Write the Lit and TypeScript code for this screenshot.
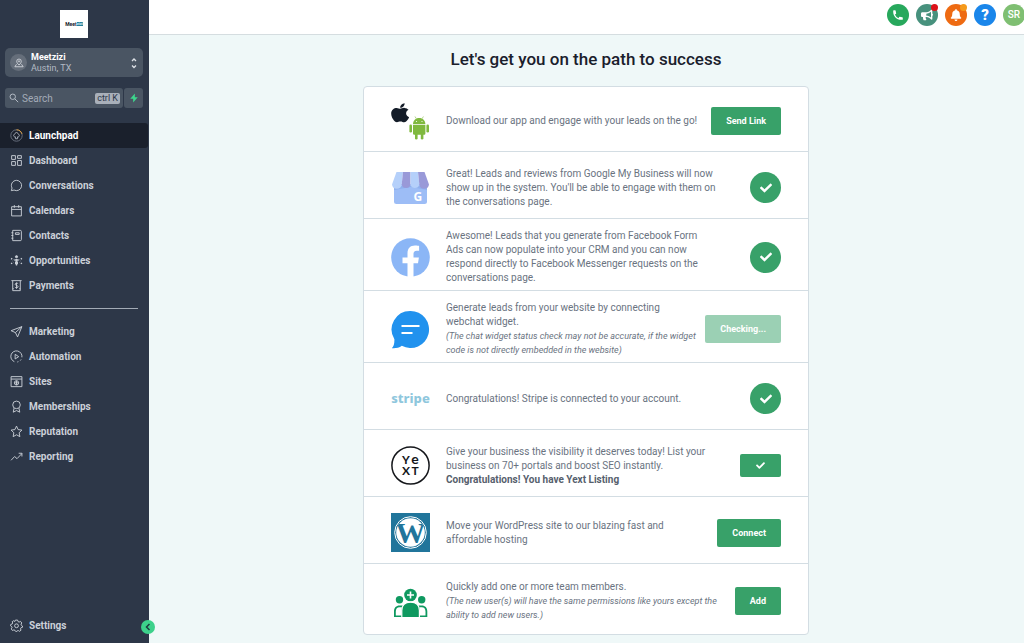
import { LitElement, html, css, svg, nothing, TemplateResult } from "lit";
import { customElement } from "lit/decorators.js";
import { classMap } from "lit/directives/class-map.js";

const checkPath = svg`<path fill="currentColor" d="M173.898 439.404l-166.4-166.4c-9.997-9.997-9.997-26.206 0-36.204l36.203-36.204c9.997-9.998 26.207-9.998 36.204 0L192 312.69 432.095 72.596c9.997-9.997 26.207-9.997 36.204 0l36.203 36.204c9.997 9.997 9.997 26.206 0 36.204l-294.4 294.401c-9.998 9.997-26.207 9.997-36.204-.001z"/>`;

const check = html`<svg class="check" viewBox="0 0 512 512" aria-hidden="true">${checkPath}</svg>`;

/* Line icons on a 24 unit grid. */
const navIcons: Record<string, unknown> = {
  launchpad: svg`<circle cx="12" cy="12" r="10.5" stroke="#6b7482"/><path d="M12 1.5A10.5 10.5 0 0 1 22 9" stroke="#e8a33d"/><path stroke="#aab1bb" d="M12 5.5l5 5.5a2.5 2.5 0 0 1-3 3.500V18h-4v-3.5A2.5 2.5 0 0 1 7 11z"/>`,
  dashboard: svg`<path d="M3 3h7v7H3zM14 3h7v5h-7zM3 14h7v7H3zM14 12h7v9h-7z"/>`,
  conversations: svg`<path d="M12 2.5a9.5 9.5 0 1 1-4.5 17.9L2.5 21.5l1.3-4.8A9.5 9.5 0 0 1 12 2.5z"/>`,
  calendars: svg`<path d="M3 5h18v17H3zM3 10h18M8 2v5M16 2v5"/>`,
  contacts: svg`<path d="M5 2.5h14a2 2 0 0 1 2 2v15a2 2 0 0 1-2 2H5zM2.5 7H6M2.5 12H6M2.5 17H6M10 7h7v3h-7z"/>`,
  opportunities: svg`<circle cx="12" cy="5" r="2" fill="currentColor"/><path d="M12 9v12M8 11h8M10.5 14v5M13.5 14v5" stroke-width="2.5"/><path d="M2 8l4 3M2 18l4-3M22 8l-4 3M22 18l-4-3" stroke-width="2.5" stroke-dasharray="2.5 2"/>`,
  payments: svg`<path d="M2.5 3h19M5 3v18.5h14V3M5 18h2M17 18h2"/><path d="M15 8.5c-1-1-5.5-1.3-5.5 1.3 0 2.7 5.5 1.6 5.5 4.3s-4.8 2.3-6 1M12 6.5v11.5"/>`,
  marketing: svg`<path d="M22 3L2 10.5l8 3.5 4 8zM22 3L10 14"/>`,
  automation: svg`<path d="M8 21.5A10.3 10.3 0 1 1 22 13.5M20.5 17.5l-1.5 2M15.5 21.5l-2 .7"/><path d="M9.5 8l6.5 4.3-6.5 4.2z"/>`,
  sites: svg`<path d="M2 3h20v18.5H2zM2 7.5h20"/><circle cx="12" cy="14.5" r="4"/><path d="M8 14.5h8M12 10.5v8"/>`,
  memberships: svg`<circle cx="12" cy="9" r="7"/><path d="M7.5 15L6 22.5l6-3 6 3-1.5-7.5"/>`,
  reputation: svg`<path d="M12 2l3 6.5 7 .9-5.1 4.9 1.3 7.2-6.2-3.5-6.2 3.5 1.3-7.2L2 9.4l7-.9z"/>`,
  reporting: svg`<path d="M2 19l6.5-7 4.5 4L22 6.5M16 6h6v6"/>`,
  settings: svg`<path d="M10 2h4l.8 2.8 2 .9 2.6-1.3 2.400 2.900-1.4 2.3.6 2.1 2 1.2v2.5l-2.7.8-1 1.900 1.100 2.500-2.900 2.200-2.200-1.500-2 .5L12.500 23h-2l-1.300-2.200-2.200-.6-2.500 1-2.200-2.900 1.500-2.200-.5-2L1 12.500l.4-2.500 2.600-.8 1-1.900L4 5l2.600-1.800L9 4.600z"/><circle cx="12" cy="12.5" r="3.5"/>`,
};

const mainLinks = ["Launchpad", "Dashboard", "Conversations", "Calendars", "Contacts", "Opportunities", "Payments"];
const toolLinks = ["Marketing", "Automation", "Sites", "Memberships", "Reputation", "Reporting"];

const logos = {
  apps: html`<svg class="logo" viewBox="0 0 39 39" aria-hidden="true">
    <path fill="#141c28" transform="translate(0 1) scale(.0475 .0422)" d="M318.7 268.7c-.2-36.7 16.4-64.4 50-84.8-18.8-26.9-47.2-41.7-84.7-44.6-35.5-2.8-74.3 20.7-88.5 20.7-15 0-49.4-19.7-76.4-19.7C63.3 141.2 4 184.8 4 273.5q0 39.3 14.4 81.2c12.8 36.7 59 126.7 107.2 125.2 25.2-.6 43-17.9 75.8-17.9 31.8 0 48.3 17.9 76.4 17.9 48.6-.7 90.4-82.5 102.6-119.3-65.2-30.7-61.7-90-61.7-91.9zm-56.6-164.2c27.3-32.4 24.8-61.9 24-72.5-24.1 1.4-52 16.4-67.9 34.9-17.5 19.8-27.8 44.3-25.6 71.9 26.1 2 49.9-11.4 69.5-34.3z"/>
    <g fill="#80b93f"><path d="M22 23.3c0-3.8 2.6-6.4 6.2-6.4s6.2 2.6 6.2 6.4z"/><path d="M22 24h12.4v8.6a1.2 1.2 0 0 1-1.2 1.2h-10A1.2 1.2 0 0 1 22 32.6z"/><rect x="18.400" y="23.5" width="2.6" height="8" rx="1.3"/><rect x="35.400" y="23.5" width="2.6" height="8" rx="1.3"/><rect x="24" y="31" width="2.6" height="7.6" rx="1.3"/><rect x="29.800" y="31" width="2.6" height="7.6" rx="1.3"/></g>
    <path d="M24 15.5l1.3 2.2M32.4 15.5l-1.3 2.2" stroke="#80b93f" stroke-width=".6"/><circle cx="25.5" cy="20.5" r=".6" fill="#fff"/><circle cx="31" cy="20.5" r=".6" fill="#fff"/>
  </svg>`,
  google: html`<svg class="logo" viewBox="0 0 39 39" aria-hidden="true">
    <path fill="#9dbdf6" d="M3 16h33v17.5a2.5 2.5 0 0 1-2.5 2.5h-28A2.5 2.5 0 0 1 3 33.5z"/>
    <path fill="#8fb0ee" d="M3 18h33v4L20 19 3 22z"/>
    <path fill="#b5d0fa" d="M5.5 4H12l-1.3 12.5a4.9 4.9 0 0 1-9.7 0z"/>
    <path fill="#9999d8" d="M12 4h7.5v12.5a4.5 4.5 0 0 1-8.8 0z"/>
    <path fill="#b5d0fa" d="M19.5 4H27l1.3 12.5a4.5 4.5 0 0 1-8.8 0z"/>
    <path fill="#9999d8" d="M27 4h6.5L38 16.5a4.9 4.9 0 0 1-9.7 0z"/>
    <text x="22.5" y="33" font-family="Open Sans, sans-serif" font-size="12" font-weight="700" fill="#fff">G</text>
  </svg>`,
  facebook: html`<svg class="logo" viewBox="0 0 39 39" aria-hidden="true">
    <circle cx="19.5" cy="19.5" r="19.3" fill="#8bb6f6"/>
    <path fill="#fff" d="M16.5 39V25.2h-5v-5.6h5v-4.3c0-5 3-7.7 7.4-7.7 2.1 0 4.2.4 4.2.4v4.8h-2.4c-2.4 0-3.2 1.5-3.2 3v3.8h5.4l-.9 5.6h-4.5V39z"/>
  </svg>`,
  chat: html`<svg class="logo" viewBox="0 0 39 39" aria-hidden="true">
    <path fill="#2192ee" d="M19.5 1a18.5 18.5 0 1 1-8.7 34.8C8 38 4 38.6.8 38.2c2-1.700 2.700-4.200 2.600-9A18.5 18.5 0 0 1 19.5 1z"/>
    <path d="M10.5 16h18M10.5 23h11" stroke="#fff" stroke-width="2.2"/>
  </svg>`,
  stripe: html`<svg class="logo" viewBox="0 0 39 39" aria-hidden="true">
    <text x="19.5" y="24" text-anchor="middle" font-family="Noto Sans, sans-serif" font-size="13" font-weight="800" fill="#8fc7dd">stripe</text>
  </svg>`,
  yext: html`<svg class="logo" viewBox="0 0 39 39" aria-hidden="true">
    <circle cx="19.5" cy="19.5" r="18.6" fill="#fff" stroke="#15171b" stroke-width="1.5"/>
    <g font-family="Lato, sans-serif" font-size="12" font-weight="700" fill="#15171b" text-anchor="middle"><text x="15" y="18">Y</text><text x="24" y="18" font-size="14">e</text><text x="15" y="29">X</text><text x="24" y="29">T</text></g>
  </svg>`,
  wordpress: html`<svg class="logo" viewBox="0 0 39 39" aria-hidden="true">
    <defs><clipPath id="wp"><circle cx="19.5" cy="19.5" r="14.3"/></clipPath></defs>
    <rect width="39" height="39" fill="#21759b"/><circle cx="19.5" cy="19.5" r="15.8" fill="none" stroke="#fff"/>
    <circle cx="19.5" cy="19.5" r="14.3" fill="#fff"/>
    <text clip-path="url(#wp)" x="19.5" y="30" text-anchor="middle" font-family="Liberation Serif, serif" font-size="30" font-weight="700" fill="#21759b">W</text>
  </svg>`,
  team: html`<svg class="logo" viewBox="0 0 39 39" aria-hidden="true">
    <g fill="#0f9960"><circle cx="19.5" cy="14" r="6.3"/><circle cx="8.5" cy="18.8" r="3.7"/><circle cx="30.7" cy="18.8" r="3.7"/>
    <path d="M3 36v-5.500c0-3.8 2.2-6 5.5-6h3V36zM36.300 36v-5.500c0-3.8-2.2-6-5.5-6h-3V36z"/><path fill="#fff" d="M4.800 34.500v-4c0-2.8 1.4-4.3 3.7-4.3h2.3v8.300zM34.500 34.500v-4c0-2.8-1.4-4.3-3.7-4.3h-2.3v8.300z"/>
    <path stroke="#fff" stroke-width="1.2" d="M10.8 36.500v-7c0-5.3 3.2-8.3 8.8-8.3s8.800 3 8.800 8.300v7z"/></g>
    <path d="M19.5 10.5v7M16 14h7" stroke="#fff" stroke-width="1.6"/>
  </svg>`,
};

interface Step {
  logo: TemplateResult;
  text: string;
  note?: string;
  strong?: string;
  action?: string;
  state?: "done" | "busy" | "listed";
}

/* Line feeds in the copy are kept as line breaks. */
const steps: Step[] = [
  { logo: logos.apps, text: "Download our app and engage with your leads on the go!", action: "Send Link" },
  { logo: logos.google, text: "Great! Leads and reviews from Google My Business will now\nshow up in the system. You'll be able to engage with them on\nthe conversations page.", state: "done" },
  { logo: logos.facebook, text: "Awesome! Leads that you generate from Facebook Form\nAds can now populate into your CRM and you can now\nrespond directly to Facebook Messenger requests on the\nconversations page.", state: "done" },
  { logo: logos.chat, text: "Generate leads from your website by connecting\nwebchat widget.", note: "(The chat widget status check may not be accurate, if the widget\ncode is not directly embedded in the website)", action: "Checking...", state: "busy" },
  { logo: logos.stripe, text: "Congratulations! Stripe is connected to your account.", state: "done" },
  { logo: logos.yext, text: "Give your business the visibility it deserves today! List your\nbusiness on 70+ portals and boost SEO instantly.", strong: "Congratulations! You have Yext Listing", state: "listed" },
  { logo: logos.wordpress, text: "Move your WordPress site to our blazing fast and\naffordable hosting", action: "Connect" },
  { logo: logos.team, text: "Quickly add one or more team members.", note: "(The new user(s) will have the same permissions like yours except the\nability to add new users.)", action: "Add" },
];

const shared = css`
  :host, * { box-sizing: border-box; }
  button, input { font: inherit; color: inherit; border: 0; margin: 0; padding: 0; background: none; }
  button { cursor: pointer; }
  a { color: inherit; text-decoration: none; }
  svg { display: block; flex: none; }
`;

@customElement("side-bar")
class SideBar extends LitElement {
  static styles = [shared, css`
    :host { display: flex; flex-direction: column; position: relative; background: #2d3748; color: #cbd0d8; padding-top: 10px; }
    .brand { align-self: center; display: flex; align-items: center; justify-content: center; width: 28px; height: 28px; margin-right: 1px; background: #fff; color: #16202c; font-size: 5px; line-height: 5px; font-weight: 700; }
    .brand-tail { background: #277f99; color: #d6eef5; font-size: 4px; line-height: 4px; }
    .account { display: flex; align-items: center; gap: 4px; height: 29px; margin: 10px 6px 11px 5px; padding: 0 5px; border-radius: 5px; background: #4a5563; text-align: left; }
    .pin { display: grid; place-items: center; width: 17px; height: 17px; border-radius: 50%; background: #656e7a; }
    .pin svg { width: 10px; height: 10px; }
    .names { flex: 1; display: flex; flex-direction: column; font-size: 9px; line-height: 11px; color: #b4bbc5; }
    .name { color: #fff; font-weight: 700; }
    .updown { width: 8px; height: 12px; }
    .search { display: flex; gap: 1px; height: 20px; margin: 0 6px 15px 5px; }
    .field { flex: 1; min-width: 0; display: flex; align-items: center; gap: 3px; padding: 0 3px 0 4px; border-radius: 3px; background: #4a5563; }
    .field svg { width: 10px; height: 10px; color: #b4bbc5; }
    .field input { flex: 1; min-width: 0; width: 0; font-size: 10px; outline: 0; }
    .field input::placeholder { color: #a3abb7; opacity: 1; }
    .field kbd { font: 9px/11px Roboto, sans-serif; background: #a9b0ba; color: #2d3748; padding: 0 2px; border-radius: 2px; }
    .quick { display: grid; place-items: center; width: 19px; border-radius: 3px; background: #4a5563; color: #3dd68c; }
    .quick svg { width: 10px; height: 10px; }
    nav { display: flex; flex-direction: column; }
    .link { display: flex; align-items: center; gap: 6px; height: 25px; padding-left: 10px; font-size: 10px; line-height: 14px; font-weight: 700; border-radius: 0 3px 3px 0; margin-right: 1px; }
    .link svg { width: 13px; height: 13px; }
    .active { background: #1a202c; color: #fff; }
    .rule { height: 1px; border: 0; background: #a3abb6; margin: 10px 11px 10px 10px; }
    .foot { margin-top: auto; margin-bottom: 5px; }
    .collapse { position: absolute; right: -6px; bottom: 9px; width: 14px; height: 14px; border-radius: 50%; background: #3dd18b; color: #1d3c3f; display: grid; place-items: center; }
    .collapse svg { width: 8px; height: 8px; }
  `];

  private link(label: string, active = false) {
    return html`<a href="#${label.toLowerCase()}" class=${classMap({ link: true, active })} aria-current=${active ? "page" : nothing}>
      <svg viewBox="0 0 24 24" fill="none" stroke="currentColor" stroke-width="1.7" aria-hidden="true">${navIcons[label.toLowerCase()]}</svg>
      <span>${label}</span></a>`;
  }

  render() {
    return html`
      <div class="brand"><span>Meet</span><span class="brand-tail">zizi</span></div>
      <button class="account">
        <span class="pin"><svg viewBox="0 0 24 24" fill="none" stroke="#d8dce2" stroke-width="2" aria-hidden="true"><path d="M12 17c-4-4-5.5-6.5-5.5-9a5.5 5.5 0 0 1 11 0c0 2.5-1.5 5-5.5 9zM6 15l-4 6h20l-4-6"/><circle cx="12" cy="8" r="1.5"/></svg></span>
        <span class="names"><span class="name">Meetzizi</span><span>Austin, TX</span></span>
        <svg class="updown" viewBox="0 0 8 12" fill="none" stroke="#dde1e6" stroke-width="1.3" aria-hidden="true"><path d="M2 4l2-2 2 2M2 8.500l2 2 2-2"/></svg>
      </button>
      <div class="search">
        <label class="field">
          <svg viewBox="0 0 24 24" fill="none" stroke="currentColor" stroke-width="2.4" aria-hidden="true"><circle cx="9" cy="9" r="6.5"/><path d="M14 14l8 8"/></svg>
          <input type="text" placeholder="Search" aria-label="Search">
          <kbd>ctrl K</kbd>
        </label>
        <button class="quick" aria-label="Quick actions"><svg viewBox="0 0 24 24" fill="currentColor" aria-hidden="true"><path d="M14 1L3 14h7v9l11-13h-7z"/></svg></button>
      </div>
      <nav aria-label="Main">${mainLinks.map((l, i) => this.link(l, i === 0))}</nav>
      <hr class="rule">
      <nav aria-label="Tools">${toolLinks.map((l) => this.link(l))}</nav>
      <nav class="foot" aria-label="Account">${this.link("Settings")}</nav>
      <button class="collapse" aria-label="Collapse menu"><svg viewBox="0 0 8 8" fill="none" stroke="currentColor" stroke-width="1.5" aria-hidden="true"><path d="M5.5 1L2.5 4l3 3"/></svg></button>
    `;
  }
}

@customElement("top-bar")
class TopBar extends LitElement {
  static styles = [shared, css`
    :host { display: flex; justify-content: flex-end; gap: 7px; height: 35px; padding-top: 4px; background: #fff; border-bottom: 1px solid #d5dde0; overflow: hidden; }
    .round { position: relative; display: grid; place-items: center; flex: none; width: 22px; height: 22px; border-radius: 50%; color: #fff; }
    .round svg { width: 12px; height: 12px; }
    .phone { background: #27a85c; }
    .news { background: #47917d; }
    .bell { background: #ee6a12; }
    .help { background: #1a86ea; font-size: 15px; line-height: 16px; font-weight: 900; }
    .user { background: #7fbf72; font-size: 10px; line-height: 12px; font-weight: 500; margin-right: -1px; }
    .dot { position: absolute; top: 0; right: 0; width: 7px; height: 7px; border-radius: 50%; }
    .red { background: #dc1218; }
    .amber { background: #f59a1c; }
  `];

  render() {
    return html`
      <button class="round phone" aria-label="Call"><svg viewBox="0 0 20 20" fill="currentColor" aria-hidden="true"><path d="M2 3a1 1 0 011-1h2.153a1 1 0 01.986.836l.74 4.435a1 1 0 01-.54 1.06l-1.548.773a11.037 11.037 0 006.105 6.105l.774-1.548a1 1 0 011.059-.54l4.435.74a1 1 0 01.836.986V17a1 1 0 01-1 1h-2C7.82 18 2 12.18 2 5V3z"/></svg></button>
      <button class="round news" aria-label="Announcements"><svg viewBox="0 0 576 512" fill="currentColor" aria-hidden="true"><path d="M576 240c0-23.63-12.95-44.04-32-55.12V32.01C544 23.26 537.02 0 512 0c-7.12 0-14.19 2.38-19.98 7.02l-85.03 68.03C364.28 109.19 310.66 128 256 128H64c-35.35 0-64 28.65-64 64v96c0 35.35 28.65 64 64 64h33.7c-1.39 10.48-2.18 21.14-2.18 32 0 39.77 9.26 77.35 25.56 110.94 5.19 10.69 16.52 17.06 28.4 17.06h74.28c26.05 0 41.69-29.84 25.9-50.56-16.4-21.52-26.15-48.36-26.15-77.44 0-11.11 1.62-21.79 4.41-32H256c54.66 0 108.28 18.81 150.98 52.95l85.03 68.03a32.023 32.023 0 0 0 19.98 7.02c24.92 0 32-22.78 32-32V295.13C563.05 284.04 576 263.63 576 240zm-96 141.42l-33.05-26.44C392.95 311.78 325.12 288 256 288v-96c69.12 0 136.95-23.78 190.95-66.98L480 98.58v282.84z"/></svg><span class="dot red"></span></button>
      <button class="round bell" aria-label="Notifications"><svg viewBox="0 0 448 512" fill="currentColor" aria-hidden="true"><path d="M224 512c35.32 0 63.97-28.65 63.97-64H160.03c0 35.35 28.65 64 63.97 64zm215.39-149.71c-19.32-20.76-55.47-51.99-55.47-154.29 0-77.7-54.48-139.9-127.94-155.16V32c0-17.67-14.32-32-31.98-32s-31.98 14.33-31.98 32v20.84C118.56 68.1 64.08 130.3 64.08 208c0 102.3-36.15 133.53-55.47 154.29-6 6.45-8.66 14.16-8.61 21.71.11 16.4 12.98 32 32.1 32h383.8c19.12 0 32-15.6 32.1-32 .05-7.55-2.61-15.27-8.61-21.71z"/></svg><span class="dot amber"></span></button>
      <button class="round help" aria-label="Help">?</button>
      <button class="round user" aria-label="Profile">SR</button>
    `;
  }
}

@customElement("step-list")
class StepList extends LitElement {
  static styles = [shared, css`
    :host { display: block; border: 1px solid #d3dde3; border-radius: 4px; background: #fff; }
    ul { list-style: none; margin: 0; padding: 0; }
    .step { display: flex; align-items: center; min-height: 67px; padding: 10px 27px 5px; color: #6a737f; font-size: 10px; line-height: 14px; }
    .step + .step { border-top: 1px solid #d3dde3; }
    .step:last-child { padding-bottom: 7px; min-height: 71px; }
    .step:first-child { min-height: 64px; padding-bottom: 7px; }
    .logo { width: 39px; height: 39px; margin-right: 16px; }
    .copy { flex: 0 1 auto; min-width: 0; white-space: pre-line; }
    .copy p { margin: 0; }
    .note { font-style: italic; font-size: 9px; }
    .strong { font-weight: 700; color: #56606d; }
    .action { flex: none; margin-left: auto; height: 28px; padding: 0 15px; border-radius: 2px; background: #38a169; color: #fff; font-size: 9px; line-height: 12px; font-weight: 700; white-space: nowrap; }
    .busy { background: #9bd0b4; }
    .listed { height: 23px; padding: 0 16px; }
    .done { display: grid; place-items: center; flex: none; width: 31px; height: 31px; margin-left: auto; border-radius: 50%; background: #38a169; color: #fff; }
    .check { width: 12px; height: 12px; }
    .listed .check { width: 9px; height: 9px; }
  `];

  private control(s: Step) {
    if (s.state === "done") return html`<span class="done" role="img" aria-label="Done">${check}</span>`;
    return html`<button class=${classMap({ action: true, busy: s.state === "busy", listed: s.state === "listed" })}
      ?disabled=${s.state === "busy"} aria-label=${s.state === "listed" ? "Listed" : nothing}>${s.action ?? check}</button>`;
  }

  private copy(s: Step) {
    const note = s.note ? html`<p class="note">${s.note}</p>` : nothing;
    const strong = s.strong ? html`<p class="strong">${s.strong}</p>` : nothing;
    return html`<div class="copy"><p>${s.text}</p>${note}${strong}</div>`;
  }

  render() {
    return html`<ul>${steps.map((s) => html`<li class="step">${s.logo}${this.copy(s)}${this.control(s)}</li>`)}</ul>`;
  }
}

@customElement("app-root")
class AppRoot extends LitElement {
  static styles = css`
    :host { display: grid; grid-template-columns: 149px minmax(0, 1fr); min-height: 100vh; background: #eff8f8; font-family: Roboto, sans-serif; }
    .page { display: flex; flex-direction: column; min-width: 0; }
    main { display: flex; flex-direction: column; align-items: center; padding: 13px 17px 7px 16px; }
    h1 { margin: 0 0 15px; font-size: 17px; line-height: 23px; font-weight: 500; color: #1a202c; }
    step-list { width: 100%; max-width: 446px; }
  `;

  render() {
    return html`
      <side-bar></side-bar>
      <div class="page">
        <top-bar></top-bar>
        <main>
          <h1>Let's get you on the path to success</h1>
          <step-list></step-list>
        </main>
      </div>`;
  }
}
